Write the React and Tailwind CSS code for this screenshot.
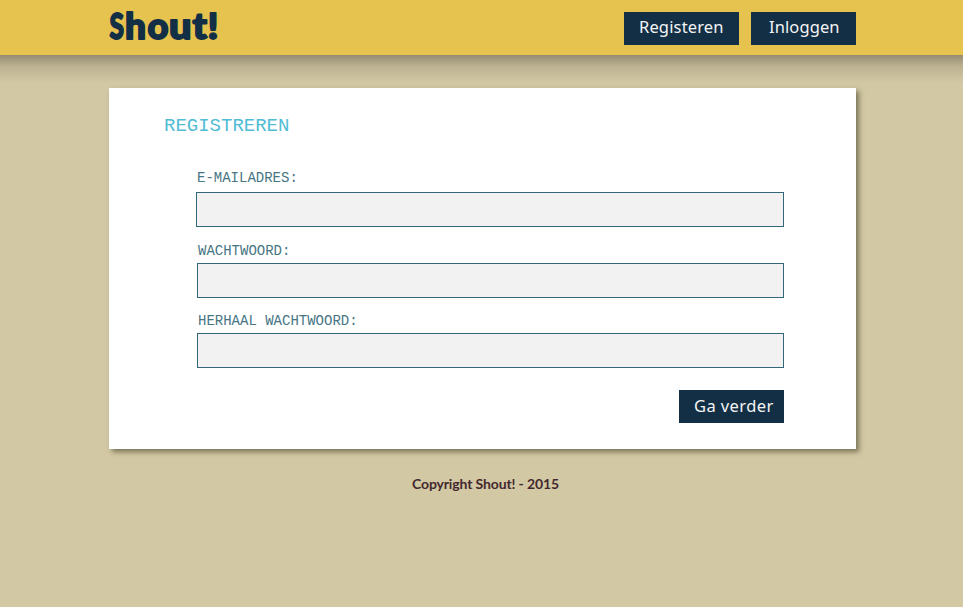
const buttonClass =
  "block h-[33px] bg-[#132f45] text-left font-['Noto_Sans',sans-serif] text-[16.5px] leading-[30px] whitespace-nowrap text-[#f4f4f4]";

const adjust = "spacingAndGlyphs";

function Logo() {
  return (
    <svg width="112" height="44" viewBox="0 0 112 44" role="img" aria-label="Shout!" className="block overflow-visible">
      <text
        y="38.5"
        fill="#132f45"
        stroke="#132f45"
        strokeWidth="1.8"
        strokeLinejoin="round"
        fontFamily="Lato, sans-serif"
        fontWeight="900"
        fontSize="36"
      >
        <tspan x="0.5" textLength="14.5" lengthAdjust={adjust}>S</tspan>
        <tspan x="16" textLength="21" lengthAdjust={adjust}>h</tspan>
        <tspan x="38.5" textLength="21" lengthAdjust={adjust}>o</tspan>
        <tspan x="60" textLength="22.5" lengthAdjust={adjust}>u</tspan>
        <tspan x="83.5" textLength="14.5" lengthAdjust={adjust}>t</tspan>
        <tspan x="98.5" textLength="11" lengthAdjust={adjust}>!</tspan>
      </text>
    </svg>
  );
}

function Field({ label, type, id, labelClass = "", inputClass = "ml-px w-[587px]" }) {
  return (
    <div>
      <label
        htmlFor={id}
        className={`block h-5 font-['Liberation_Mono',monospace] text-[14px] whitespace-pre text-[#477584] ${labelClass}`}
      >
        {label}
      </label>
      <input
        id={id}
        type={type}
        className={`mt-[3px] block h-[35px] border border-[#346779] bg-[#f2f2f2] px-2 outline-none ${inputClass}`}
      />
    </div>
  );
}

export default function App() {
  return (
    <div className="min-h-screen bg-[#d2c8a4]">
      <header className="h-[55px] bg-[#e6c34f]">
        <div className="ml-[109px] flex w-[747px] justify-between">
          <Logo />
          <nav className="flex gap-3 pt-3">
            <button className={`${buttonClass} w-[115px] pb-[3px] pl-[15px] tracking-[0.15px]`}>Registeren</button>
            <button className={`${buttonClass} w-[105px] pb-[3px] pl-[18px] tracking-[0.1px]`}>Inloggen</button>
          </nav>
        </div>
      </header>
      <div className="h-[33px] bg-linear-to-b from-[#948b72] via-[#bdb392] via-35% to-[#d2c8a4] to-85%" />
      <main className="ml-[109px] h-[361px] w-[747px] bg-white pt-[25px] shadow-[3px_3px_5px_#7b7559]">
        <h1 className="ml-[55px] h-6 font-['Liberation_Mono',monospace] text-[19px] leading-[26px] text-[#51bdd5]">
          REGISTREREN
        </h1>
        <form className="ml-[87px] w-[588px] pt-[32px]">
          <Field id="email" type="email" label="E-MAILADRES:" labelClass="ml-px leading-[18px]" inputClass="w-[588px]" />
          <div className="pt-[13px]">
            <Field id="password" type="password" label="WACHTWOORD:" labelClass="ml-[2px] leading-[22px]" />
          </div>
          <div className="pt-3">
            <Field id="repeat" type="password" label="HERHAAL WACHTWOORD:" labelClass="ml-[2px] leading-[22px]" />
          </div>
          <div className="flex justify-end pt-[22px]">
            <button type="button" className={`${buttonClass} w-[105px] pb-[1px] pl-[15px] tracking-[0.4px]`}>Ga verder</button>
          </div>
        </form>
      </main>
      <footer className="ml-[412px] pt-[25px] font-['Lato',sans-serif] text-[14px] leading-5 font-bold tracking-[-0.13px] text-[#44282f]">
        Copyright Shout! - 2015
      </footer>
    </div>
  );
}
